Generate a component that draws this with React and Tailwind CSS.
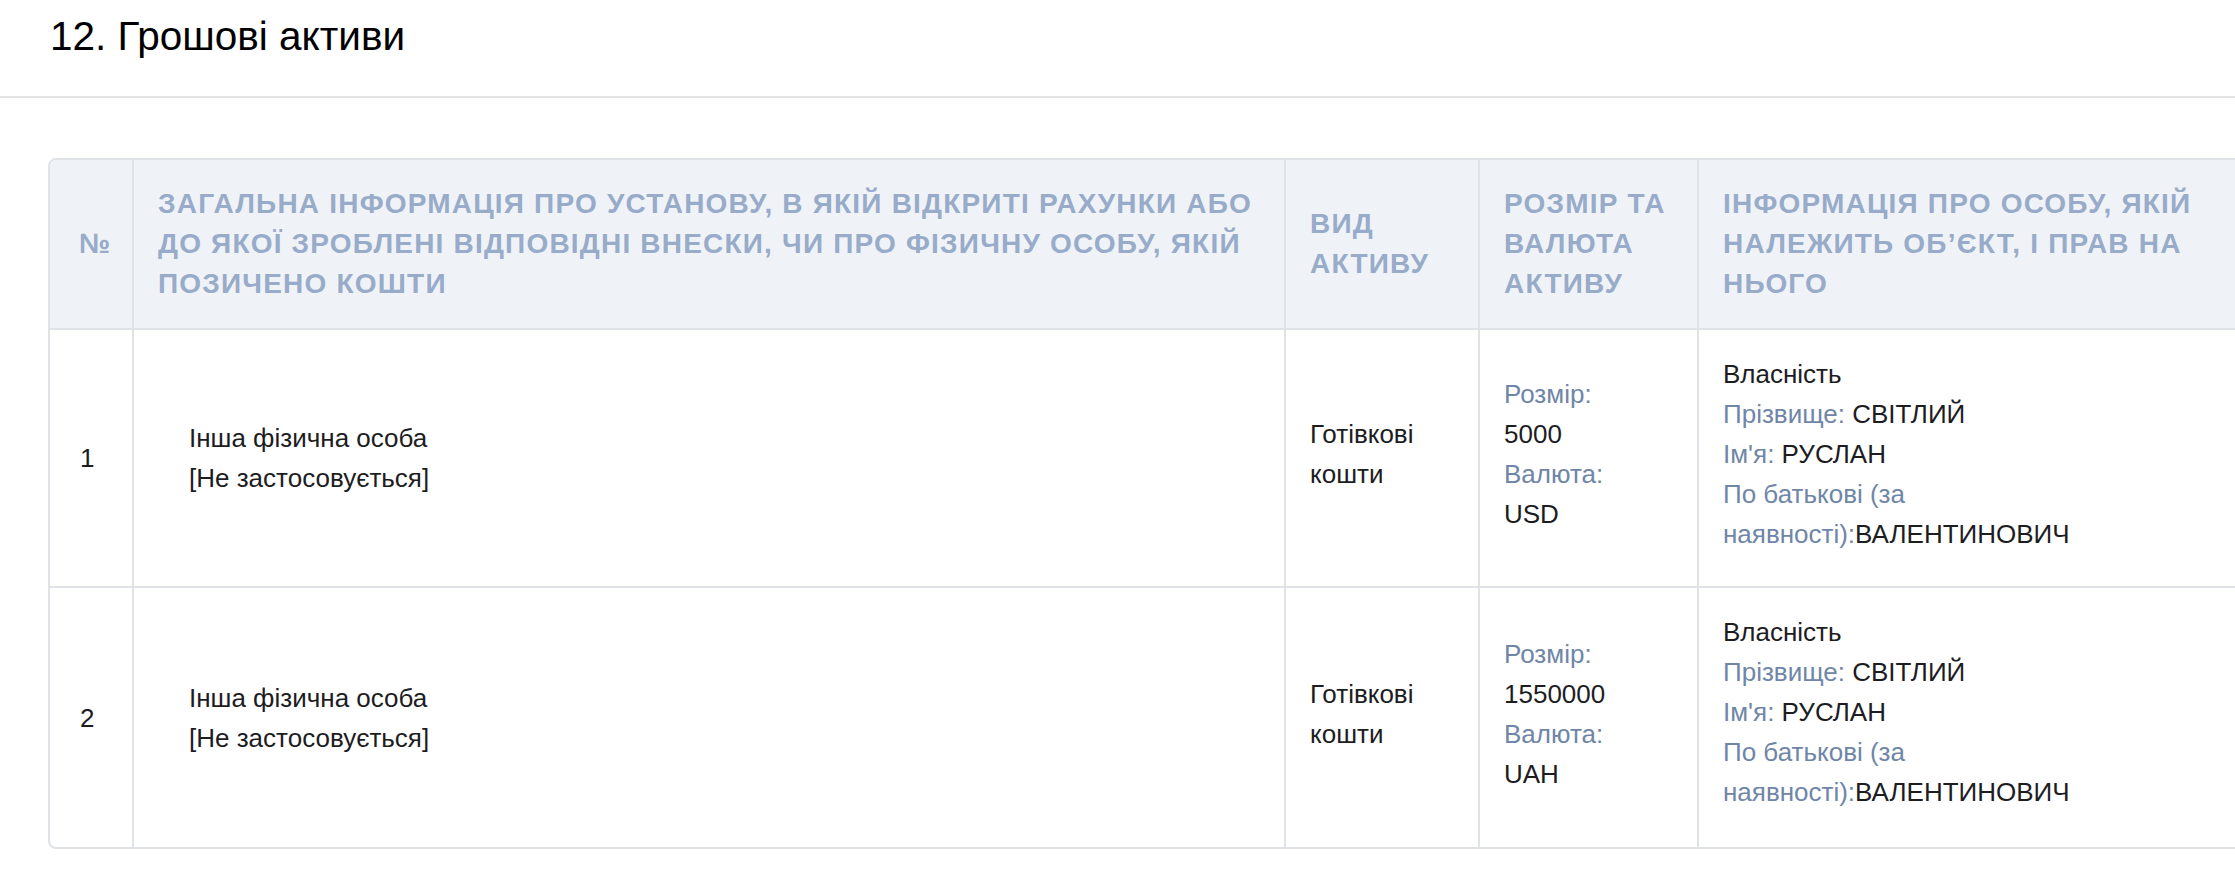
import React from "react";

const rows = [
  { n: 1, amount: "5000", currency: "USD" },
  { n: 2, amount: "1550000", currency: "UAH" },
];

const cols = "grid grid-cols-[82px_1152px_194px_219px_556px]";

function Label({ children }) {
  return <span className="text-[#6f86a8]">{children}</span>;
}

export default function App() {
  return (
    <div className="w-full overflow-hidden bg-white text-[#1d1d1f] font-['Liberation_Sans',Arial,sans-serif]">
      {/* Section title */}
      <div className="border-b-2 border-[#e3e3e3] px-[50px] pt-[12px] pb-[36px]">
        <h2 className="text-[40.5px] leading-[48px] text-black">12. Грошові активи</h2>
      </div>

      {/* Table */}
      <div className="mt-[60px] ml-[48px] w-[2207px] rounded-[8px] border-2 border-[#dfe3e8] overflow-hidden">
        <div className={`${cols} bg-[#eff3f8] border-b-2 border-[#dfe3e8] text-[28px] leading-[40px] font-bold uppercase tracking-[1.2px] text-[#98abc9]`}>
          <div className="flex items-center pl-[29px] py-6">№</div>
          <div className="flex items-center border-l-2 border-[#dfe3e8] px-6 py-6">
            Загальна інформація про установу, в якій відкриті рахунки або до якої зроблені відповідні внески, чи про фізичну особу, якій позичено кошти
          </div>
          <div className="flex items-center border-l-2 border-[#dfe3e8] px-6 py-6">Вид активу</div>
          <div className="flex items-center border-l-2 border-[#dfe3e8] px-6 py-6">Розмір та валюта активу</div>
          <div className="flex items-center border-l-2 border-[#dfe3e8] px-6 py-6">
            Інформація про особу, якій належить об’єкт, і прав на нього
          </div>
        </div>

        {rows.map((r, i) => (
          <div
            key={r.n}
            className={`${cols} text-[26px] leading-[40px] ${i < rows.length - 1 ? "border-b-2 border-[#dfe3e8]" : ""}`}
          >
            <div className="flex items-center pl-[30px] py-7">{r.n}</div>
            <div className="flex items-center border-l-2 border-[#dfe3e8] pl-[55px] pr-6 py-7">
              <div>
                <div>Інша фізична особа</div>
                <div>[Не застосовується]</div>
              </div>
            </div>
            <div className="flex items-center border-l-2 border-[#dfe3e8] px-6 pt-6 pb-8">
              <div>Готівкові кошти</div>
            </div>
            <div className="flex items-center border-l-2 border-[#dfe3e8] px-6 pt-6 pb-8">
              <div>
                <div><Label>Розмір:</Label></div>
                <div>{r.amount}</div>
                <div><Label>Валюта:</Label></div>
                <div>{r.currency}</div>
              </div>
            </div>
            <div className={`flex items-center border-l-2 border-[#dfe3e8] px-6 pt-6 ${i === rows.length - 1 ? "pb-[35px]" : "pb-8"}`}>
              <div>
                <div>Власність</div>
                <div><Label>Прізвище:</Label> СВІТЛИЙ</div>
                <div><Label>Ім'я:</Label> РУСЛАН</div>
                <div><Label>По батькові (за наявності):</Label>ВАЛЕНТИНОВИЧ</div>
              </div>
            </div>
          </div>
        ))}
      </div>
      <div className="h-[45px]" />
    </div>
  );
}
